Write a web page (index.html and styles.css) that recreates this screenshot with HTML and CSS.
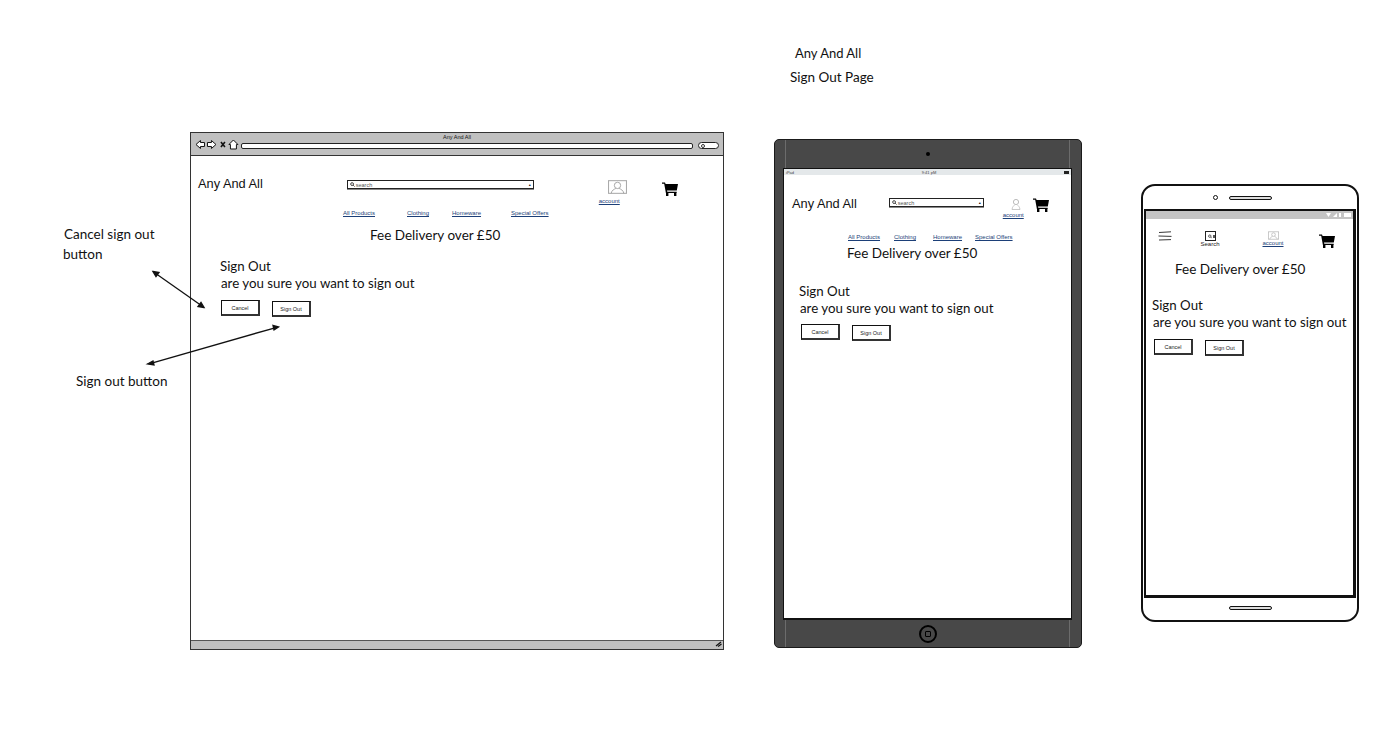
FILE: index.html
```html
<!DOCTYPE html>
<html lang="en">
<head>
  <meta charset="UTF-8">
  <meta name="viewport" content="width=device-width, initial-scale=1.0">
  <title>Any And All - Sign Out Page</title>
  <link rel="stylesheet" href="styles.css">
</head>
<body>
  <svg width="0" height="0" class="defs">
    <symbol id="cart" viewBox="0 0 16 14">
      <path d="M0 .6h3l.6 1.400H16l-1.200 6.400H5l.3 1.300h9.400v1.200H3.900L2.200 1.800H0z" fill="#000"/>
      <rect x="4" y="11" width="2.400" height="3" fill="#000"/>
      <rect x="12" y="11" width="2.400" height="3" fill="#000"/>
    </symbol>
    <symbol id="person" viewBox="0 0 18 13">
      <rect x=".5" y=".5" width="17" height="12" fill="#fff" stroke="#aaa"/>
      <circle cx="9" cy="5" r="3" fill="none" stroke="#999" stroke-width=".8"/>
      <path d="M3 12.500c.5-3 3-4 4.400-4.600M15 12.500c-.5-3-3-4-4.400-4.600" fill="none" stroke="#999" stroke-width=".8"/>
    </symbol>
    <symbol id="person-bare" viewBox="0 0 10 12">
      <circle cx="5" cy="4" r="2.600" fill="none" stroke="#aaa" stroke-width=".8"/>
      <path d="M1 11.500c.3-3 2-3.600 2.600-4.600M9 11.500c-.3-3-2-3.600-2.600-4.600M1 11.500h8" fill="none" stroke="#bbb" stroke-width=".8"/>
    </symbol>
    <symbol id="mag" viewBox="0 0 6 6">
      <circle cx="2.500" cy="2.500" r="1.700" fill="none" stroke="#222" stroke-width="1"/>
      <path d="M3.800 3.800 5.500 5.500" stroke="#222" stroke-width="1"/>
    </symbol>
  </svg>

  <div class="canvas">
    <p class="label label-title">Any And All</p>
    <p class="label label-page">Sign Out Page</p>

    <p class="label note-cancel">Cancel sign out</p>
    <p class="label note-cancel-2">button</p>
    <p class="label note-signout">Sign out button</p>

    <!-- desktop -->
    <div class="browser">
      <div class="browser-bar">
        <span class="browser-title">Any And All</span>
        <div class="browser-tools">
          <svg class="tool-icons" width="44" height="11" viewBox="0 0 44 11">
            <path d="M1 5.500 5.500 1.500v2h4v4h-4v2z" fill="#fff" stroke="#111"/>
            <path d="M21 5.500 16.500 1.500v2h-4v4h4v2z" fill="#fff" stroke="#111"/>
            <path d="M26 3l4 5M30 3l-4 5" stroke="#111" stroke-width="1.600"/>
            <path d="M38.500 1 34 5.500h1.500V10h6V5.500H43z" fill="#fff" stroke="#111"/>
          </svg>
          <span class="url-box"></span>
          <span class="url-btn"><i></i></span>
        </div>
      </div>
      <div class="browser-page">
        <div class="head head-desktop">
          <span class="logo">Any And All</span>
          <span class="search search-desktop"><svg width="5" height="5"><use href="#mag"/></svg>search<b>&bull;</b></span>
          <span class="account account-desktop">
            <svg width="19" height="14"><use href="#person"/></svg>
            <a>account</a>
          </span>
          <svg class="cart-desktop" width="16" height="14"><use href="#cart"/></svg>
        </div>
        <nav class="links links-desktop">
          <a>All Products</a><a>Clothing</a><a>Homeware</a><a>Special Offers</a>
        </nav>
        <p class="promo promo-desktop">Fee Delivery over &pound;50</p>
        <div class="signout signout-desktop">
          <h2>Sign Out</h2>
          <p>are you sure you want to sign out</p>
          <div class="btns">
            <button type="button">Cancel</button>
            <button type="button" class="btn-low">Sign Out</button>
          </div>
        </div>
      </div>
      <div class="browser-foot">
        <svg width="7" height="6" viewBox="0 0 7 6"><path d="M1 5 6 1M3 5.500 6.500 3" stroke="#111" stroke-width="1.200"/></svg>
      </div>
    </div>

    <!-- tablet -->
    <div class="tablet">
      <span class="camera"></span>
      <div class="tablet-screen">
        <div class="tablet-status"><span>iPad</span><span>9:41 pM</span><span class="batt"></span></div>
        <div class="head head-tablet">
          <span class="logo">Any And All</span>
          <span class="search search-tablet"><svg width="5" height="5"><use href="#mag"/></svg>search<b>&bull;</b></span>
          <span class="account account-tablet">
            <svg width="10" height="12"><use href="#person-bare"/></svg>
            <a>account</a>
          </span>
          <svg class="cart-tablet" width="16" height="14"><use href="#cart"/></svg>
        </div>
        <nav class="links links-tablet">
          <a>All Products</a><a>Clothing</a><a>Homeware</a><a>Special Offers</a>
        </nav>
        <p class="promo promo-tablet">Fee Delivery over &pound;50</p>
        <div class="signout signout-tablet">
          <h2>Sign Out</h2>
          <p>are you sure you want to sign out</p>
          <div class="btns">
            <button type="button">Cancel</button>
            <button type="button" class="btn-low">Sign Out</button>
          </div>
        </div>
      </div>
      <span class="home-btn"><i></i></span>
    </div>

    <!-- phone -->
    <div class="phone">
      <div class="phone-top"><span class="dot"></span><span class="speaker"></span></div>
      <div class="phone-screen">
        <div class="phone-status">
          <svg width="26" height="6" viewBox="0 0 26 6">
            <path d="M0 1h5L2.500 5zM7 5l4-4v4zM13 1h2v4h-2zM18 1h7v4h-7z" fill="#fff"/>
          </svg>
        </div>
        <div class="head head-phone">
          <svg class="burger" width="14" height="10" viewBox="0 0 14 10">
            <path d="M1 1.500 13 .8M.5 5l13 .4M1 9l12-.4" stroke="#222" stroke-width=".9" fill="none"/>
          </svg>
          <span class="phone-search">
            <span class="search-square"><svg width="5" height="5"><use href="#mag"/></svg><i></i></span>
            Search
          </span>
          <span class="account account-phone">
            <svg width="11" height="9"><use href="#person"/></svg>
            <a>account</a>
          </span>
          <svg class="cart-phone" width="16" height="14"><use href="#cart"/></svg>
        </div>
        <p class="promo promo-phone">Fee Delivery over &pound;50</p>
        <div class="signout signout-phone">
          <h2>Sign Out</h2>
          <p>are you sure you want to sign out</p>
          <div class="btns">
            <button type="button">Cancel</button>
            <button type="button" class="btn-low">Sign Out</button>
          </div>
        </div>
      </div>
      <div class="phone-bottom"><span class="speaker"></span></div>
    </div>

    <svg class="arrows" width="1400" height="735" viewBox="0 0 1400 735">
      <g stroke="#111" stroke-width="1.300" fill="#111">
        <line x1="155" y1="273" x2="202" y2="306"/>
        <path d="M153 271.500 159 272.500 156 276.500z"/>
        <path d="M204 307.500 198 306.500 201 302.500z"/>
        <line x1="150" y1="363.500" x2="276" y2="327.500"/>
        <path d="M147.500 364 153 361 154 365z"/>
        <path d="M278.500 327 273 325.500 274 330z"/>
      </g>
    </svg>
  </div>
</body>
</html>
```

FILE: styles.css
```css
* {
  box-sizing: border-box;
}

body {
  margin: 0;
  background-color: #fff;
  font-family: "Lato", sans-serif;
  color: #111;
}

p, h2 {
  margin: 0;
  font-weight: normal;
}

.defs {
  position: absolute;
}

.canvas {
  position: relative;
  width: 1400px;
  height: 735px;
  overflow: hidden;
}

.arrows {
  position: absolute;
  left: 0;
  top: 0;
  pointer-events: none;
}

/* loose labels on the wireframe board */
.label {
  position: absolute;
  font-size: 13.500px;
  line-height: 16px;
  white-space: nowrap;
}
.label-title { left: 795px; top: 45px; font-size: 13px; }
.label-page { left: 790px; top: 69px; }
.note-cancel { left: 64px; top: 226px; }
.note-cancel-2 { left: 63px; top: 246px; }
.note-signout { left: 76px; top: 373px; }

/* desktop browser */
.browser {
  position: absolute;
  left: 190px;
  top: 132px;
  width: 534px;
  height: 518px;
  display: flex;
  flex-direction: column;
  border: 1px solid #333;
  background-color: #fff;
}

.browser-bar {
  height: 23px;
  background-color: #c0c0c0;
  border-bottom: 1px solid #333;
  flex-shrink: 0;
}

.browser-title {
  display: block;
  text-align: center;
  font-family: "Liberation Sans", sans-serif;
  font-size: 5.500px;
  line-height: 8px;
}

.browser-tools {
  display: flex;
  align-items: center;
  gap: 4px;
  margin-top: -2px;
  padding: 0 4px;
}

.tool-icons {
  margin-bottom: 2px;
}

.url-box {
  width: 453px;
  height: 6px;
  margin-left: -2px;
  background-color: #fff;
  border: 1px solid #222;
  border-radius: 2px;
}

.url-btn {
  width: 21px;
  height: 7px;
  margin-left: 1px;
  padding: 1px 2px;
  background-color: #fff;
  border: 1px solid #222;
  border-radius: 4px;
}
.url-btn i {
  display: block;
  width: 4px;
  height: 4px;
  border: 1px solid #333;
  border-radius: 50%;
}

.browser-page {
  flex: 1;
}

.browser-foot {
  height: 9px;
  background-color: #c0c0c0;
  border-top: 1px solid #555;
  display: flex;
  justify-content: flex-end;
  padding-right: 1px;
  flex-shrink: 0;
}

/* shared header bits */
.head {
  display: flex;
  align-items: flex-start;
}

.logo {
  font-family: "Liberation Sans", sans-serif;
  font-size: 12.800px;
  line-height: 16px;
  white-space: nowrap;
}

.search {
  display: flex;
  align-items: center;
  gap: 1px;
  height: 9px;
  padding: 0 2px;
  border: 1px solid #222;
  box-shadow: 0 1px 0 #888;
  font-family: "Liberation Sans", sans-serif;
  font-size: 5.500px;
  color: #555;
}
.search b {
  margin-left: auto;
  font-size: 6px;
  color: #111;
}

.account {
  display: flex;
  flex-direction: column;
  align-items: flex-start;
  gap: 4px;
}

.account a, .links a {
  font-family: "Liberation Sans", sans-serif;
  font-size: 6px;
  line-height: 7px;
  color: #1c3f78;
  text-decoration: underline;
  white-space: nowrap;
}

.links {
  display: grid;
}

.promo {
  font-size: 13.500px;
  line-height: 18px;
  white-space: nowrap;
}

.signout h2 {
  font-size: 13.300px;
  line-height: 16px;
}
.signout p {
  font-size: 13.300px;
  line-height: 18px;
  margin-left: 1px;
}

.btns {
  display: flex;
  align-items: flex-start;
  gap: 12px;
  margin-left: 1px;
  margin-top: 8px;
}

button {
  width: 39px;
  height: 16px;
  padding: 0;
  background-color: #fff;
  border: 1px solid #111;
  border-right: 2px solid #333;
  border-bottom: 2px solid #333;
  border-radius: 0;
  font-family: "Liberation Sans", sans-serif;
  font-size: 5.500px;
  color: #222;
}

.btn-low {
  margin-top: 1px;
}

/* desktop placement */
.head-desktop {
  padding: 20px 0 0 7px;
  height: 54px;
}
.search-desktop { width: 187px; margin: 4px 0 0 84px; }
.account-desktop { width: 27px; margin: 4px 0 0 65px; }
.account-desktop svg { margin-left: 9px; }
.cart-desktop { margin: 6px 0 0 36px; }
.links-desktop {
  grid-template-columns: 64px 45px 59px auto;
  padding-left: 152px;
}
.promo-desktop { margin: 9px 0 0 179px; }
.signout-desktop { margin: 14px 0 0 29px; }

/* tablet */
.tablet {
  position: absolute;
  left: 774px;
  top: 139px;
  width: 308px;
  height: 509px;
  padding: 28px 9px 0 8px;
  background-color: #484848;
  border: 1px solid #1a1a1a;
  border-radius: 5px;
}
.tablet::before, .tablet::after {
  content: "";
  position: absolute;
  top: 0;
  bottom: 0;
  width: 1px;
  background-color: #6c6c6c;
}
.tablet::before { left: 10px; }
.tablet::after { right: 11px; }

.camera {
  position: absolute;
  left: 151px;
  top: 12px;
  width: 4px;
  height: 4px;
  border-radius: 50%;
  background-color: #000;
}

.tablet-screen {
  position: relative;
  z-index: 1;
  height: 452px;
  background-color: #fff;
  border: 1px solid #111;
  border-bottom-width: 2px;
}

.tablet-status {
  display: flex;
  justify-content: space-between;
  align-items: center;
  height: 6px;
  padding: 0 2px;
  background-color: #e4e8ea;
  font-family: "Liberation Sans", sans-serif;
  font-size: 4px;
  color: #444;
}
.batt {
  width: 5px;
  height: 3px;
  background-color: #222;
}

.head-tablet {
  padding: 21px 0 0 8px;
  height: 59px;
}
.search-tablet { width: 95px; margin: 2px 0 0 32px; }
.account-tablet { width: 22px; margin: 2px 0 0 19px; gap: 2px; }
.account-tablet svg { margin-left: 8px; }
.cart-tablet { margin: 2px 0 0 8px; }
.links-tablet {
  grid-template-columns: 46px 39px 42px auto;
  padding-left: 64px;
}
.promo-tablet { margin: 3px 0 0 63px; }
.signout-tablet { margin: 21px 0 0 15px; }
.signout-tablet .btns { margin: 7px 0 0 2px; }

.home-btn {
  position: absolute;
  left: 144px;
  top: 485px;
  width: 18px;
  height: 18px;
  padding: 4px;
  border: 2px solid #000;
  border-radius: 50%;
}
.home-btn i {
  display: block;
  width: 6px;
  height: 6px;
  border: 1px solid #000;
  border-radius: 1px;
}

/* phone */
.phone {
  position: absolute;
  left: 1141px;
  top: 184px;
  width: 218px;
  height: 438px;
  display: flex;
  flex-direction: column;
  background-color: #fff;
  border: 2px solid #111;
  border-radius: 14px;
}

.phone-top {
  height: 23px;
  display: flex;
  align-items: center;
  justify-content: center;
  gap: 11px;
  padding-right: 15px;
}

.dot {
  width: 5px;
  height: 5px;
  border: 1.500px solid #111;
  border-radius: 50%;
}

.speaker {
  display: block;
  width: 43px;
  height: 4px;
  border: 1px solid #111;
  border-radius: 3px;
  background-color: #ddd;
}

.phone-screen {
  height: 389px;
  margin: 0 1px;
  border: 2px solid #111;
  border-width: 2px 3px 3px 2px;
}

.phone-status {
  display: flex;
  justify-content: flex-end;
  align-items: center;
  height: 8px;
  padding-right: 1px;
  background-color: #c4c4c4;
}

.head-phone {
  height: 41px;
  padding: 11px 0 0 12px;
}
.burger { margin-top: 1px; }
.phone-search {
  display: flex;
  flex-direction: column;
  align-items: center;
  width: 22px;
  margin: 1px 0 0 27px;
  font-family: "Liberation Sans", sans-serif;
  font-size: 6px;
  line-height: 7px;
  color: #222;
}
.search-square {
  display: flex;
  align-items: center;
  gap: 1px;
  width: 11px;
  height: 10px;
  padding-left: 2px;
  border: 1px solid #222;
}
.search-square i {
  width: 2px;
  height: 3px;
  background-color: #555;
}
.account-phone { width: 24px; margin: 1px 0 0 40px; gap: 0; align-items: center; }
.cart-phone { margin: 4px 0 0 34px; }
.promo-phone { margin: 0 0 0 29px; }
.signout-phone { margin: 19px 0 0 6px; }
.signout-phone .btns { margin: 8px 0 0 2px; }

.phone-bottom {
  flex: 1;
  display: flex;
  align-items: center;
  justify-content: center;
  padding-bottom: 2px;
}
```
